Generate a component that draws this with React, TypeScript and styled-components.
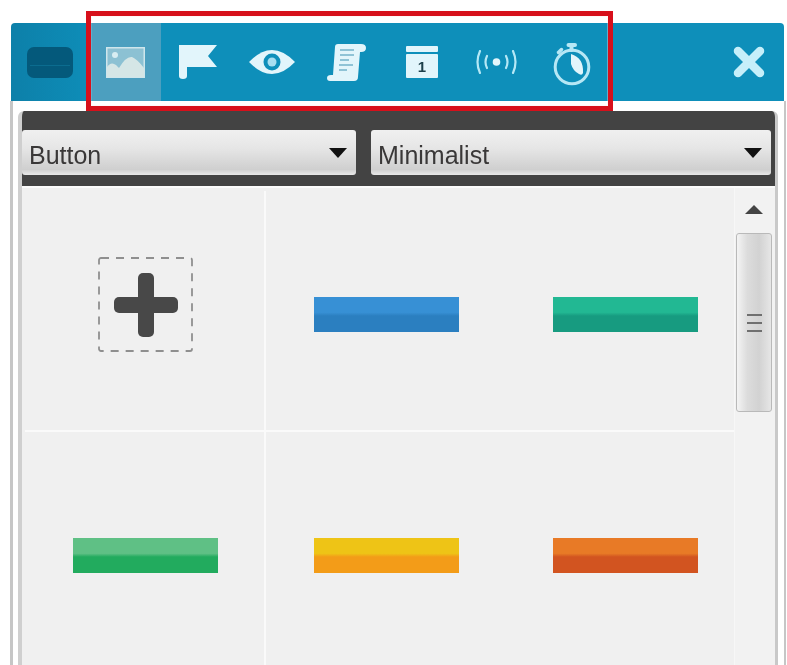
import React from 'react'
import styled, { createGlobalStyle } from 'styled-components'

const GlobalStyle = createGlobalStyle`
  html, body {
    margin: 0;
    padding: 0;
    background: #fff;
    overflow: hidden;
  }
`

const ICON = '#e2f5fb'

const Page = styled.div`
  position: relative;
  box-sizing: border-box;
  width: 787px;
  height: 665px;
  padding: 23px 3px 0 11px;
  overflow: hidden;
  font-family: "Liberation Sans", Arial, sans-serif;
  filter: blur(0.6px);
`

const Header = styled.header`
  display: flex;
  align-items: stretch;
  height: 78px;
  padding-left: 16px;
  border-radius: 4px 4px 0 0;
  background: linear-gradient(90deg, #0d80a9 0, #0e8fba 90px, #0e8fba 100%);
`

const MenuButton = styled.div`
  position: relative;
  align-self: center;
  width: 46px;
  height: 31px;
  margin: 0 19px 0 0;
  border-radius: 7px;
  background: #04597b;

  &::after {
    content: '';
    position: absolute;
    left: 3px;
    right: 3px;
    top: 18px;
    height: 1px;
    background: #0b6c8f;
  }
`

const Tabs = styled.nav`
  display: flex;
  flex: 1;
`

const Tab = styled.div<{ $width: number; $active?: boolean }>`
  display: flex;
  align-items: center;
  justify-content: center;
  width: ${(p) => p.$width}px;
  padding-right: ${(p) => (p.$active ? 3 : 0)}px;
  box-sizing: border-box;
  background: ${(p) => (p.$active ? '#4c9fbf' : 'transparent')};
`

const CloseButton = styled.div`
  display: flex;
  align-items: center;
  margin-right: 19px;
`

const Highlight = styled.div`
  position: absolute;
  left: 86px;
  top: 11px;
  width: 527px;
  height: 100px;
  box-sizing: border-box;
  border: 5.5px solid #d7101b;
  box-shadow: inset 0 0 0 1px rgba(255, 235, 235, 0.35);
  pointer-events: none;
`

const Body = styled.div`
  height: 564px;
  margin: 0 -2px 0 -1px;
  padding: 10px 6px 0 5px;
  border-left: 3px solid #c6c6c6;
  border-right: 2px solid #c6c6c6;
  background: #fff;
`

const Panel = styled.div`
  height: 100%;
  border-radius: 6px 6px 0 0;
  border-left: 4px solid #cfcfcf;
  border-right: 3px solid #c9c9c9;
  background: #f0f0f0;
  overflow: hidden;
`

const Toolbar = styled.div`
  display: grid;
  grid-template-columns: 334px 1fr;
  gap: 15px;
  margin: 0 -3px 0 -4px;
  padding: 19px 7px 11px 4px;
  border-bottom: 2px solid #fbfbfb;
  background: #434343;
`

const Select = styled.div`
  display: flex;
  align-items: center;
  justify-content: space-between;
  height: 45px;
  padding: 0 9px 0 7px;
  border-radius: 3px;
  background: linear-gradient(180deg, #f0f0f0 0, #e6e6e6 40%, #cfcfcf 88%, #e9e9e9 100%);
  color: #3a3838;
  font-size: 25px;
`

const SelectLabel = styled.span`
  padding-top: 5px;
`

const Caret = styled.span`
  width: 0;
  height: 0;
  border-left: 9px solid transparent;
  border-right: 9px solid transparent;
  border-top: 10px solid #111;
`

const ListArea = styled.div`
  display: flex;
  height: 100%;
`

const List = styled.div`
  flex: 1;
  min-width: 0;
  padding: 3px 0 0 3px;
  overflow: hidden;
`

const Grid = styled.div`
  display: grid;
  grid-template-columns: 241px 241px 237px;
  grid-auto-rows: 241px;
  width: 719px;
`

const Cell = styled.div`
  display: flex;
  align-items: center;
  justify-content: center;
  box-sizing: border-box;
  padding-top: 8px;
  border-bottom: 2px solid #fafafa;

  &:nth-child(3n + 1) {
    box-shadow: inset -2px 0 0 #fafafa;
  }
`

const AddSlot = styled.div`
  display: flex;
  margin-bottom: 20px;
`

const StyleSwatch = styled.div<{ $top: string; $bottom: string }>`
  width: 145px;
  height: 35px;
  background: linear-gradient(180deg, ${(p) => p.$top} 0, ${(p) => p.$top} 44%, ${(p) => p.$bottom} 54%, ${(p) => p.$bottom} 100%);
`

const Scrollbar = styled.div`
  display: flex;
  flex-direction: column;
  align-items: center;
  flex: 0 0 40px;
  box-sizing: border-box;
  padding: 17px 3px 0 1px;
  border-left: 1px solid #f7f7f7;
  background: #f2f2f2;
`

const ScrollArrow = styled.span`
  width: 0;
  height: 0;
  border-left: 9px solid transparent;
  border-right: 9px solid transparent;
  border-bottom: 9px solid #444;
`

const ScrollThumb = styled.div`
  display: flex;
  flex-direction: column;
  align-items: center;
  justify-content: center;
  gap: 6px;
  box-sizing: border-box;
  width: 36px;
  height: 179px;
  margin-top: 19px;
  border: 1px solid #b9b9b9;
  border-radius: 3px;
  background: linear-gradient(90deg, #f4f4f4 0, #dcdcdc 30%, #d2d2d2 65%, #e6e6e6 100%);
`

const Grip = styled.span`
  width: 15px;
  height: 2px;
  background: #6f6f6f;
`

const SWATCHES = [
  { top: '#3790d5', bottom: '#2b7fc0' },
  { top: '#22b893', bottom: '#179b80' },
  { top: '#5fc085', bottom: '#22ab5e' },
  { top: '#eec416', bottom: '#f39c18' },
  { top: '#e87a26', bottom: '#d25420' },
]

function ImageIcon() {
  return (
    <svg width="39" height="31" viewBox="0 0 39 31">
      <rect x="0.75" y="0.75" width="37.5" height="29.5" fill="#8cc1d3" stroke="#cfe6ec" strokeWidth="1.5" />
      <circle cx="9" cy="8" r="3" fill="#d8edf2" />
      <path d="M1 30 V20 Q5 14 10 18 L13 21 Q20 9 26 10 Q31 12 38 21 V30 Z" fill="#d5e6e6" />
    </svg>
  )
}

function FlagIcon() {
  return (
    <svg width="39" height="34" viewBox="0 0 39 34">
      <path d="M1 0 H39 L30 11 L39 22 H9 V31 Q9 34 5 34 Q1 34 1 31 Z" fill={ICON} />
    </svg>
  )
}

function EyeIcon() {
  return (
    <svg width="46" height="24" viewBox="0 0 46 24">
      <path d="M0 12 Q23 -12 46 12 Q23 36 0 12 Z" fill={ICON} />
      <circle cx="23" cy="12" r="8.5" fill="#0e8fba" />
      <circle cx="23" cy="12" r="4.5" fill="#a8def0" />
    </svg>
  )
}

function ScrollIcon() {
  return (
    <svg width="39" height="37" viewBox="0 0 39 37">
      <path d="M8 3 Q8 0 11 0 H34 Q39 0 39 4 Q39 8 34 8 H33 L31 33 Q31 37 27 37 H3 Q0 37 0 34 Q0 31 4 31 H6 Z" fill={ICON} />
      <path d="M13 6 H27 M13 11 H27 M13 16 H22 M12 21 H26 M12 26 H20" stroke="#8fc3d6" strokeWidth="2" />
    </svg>
  )
}

function CalendarIcon() {
  return (
    <svg width="32" height="32" viewBox="0 0 32 32">
      <rect x="0" y="0" width="32" height="6" rx="1" fill={ICON} />
      <rect x="0" y="8" width="32" height="24" rx="1" fill={ICON} />
      <text x="16" y="26" textAnchor="middle" fontSize="15" fontWeight="700" fontFamily="Liberation Sans, sans-serif" fill="#1d3f4a">1</text>
    </svg>
  )
}

function SignalIcon() {
  return (
    <svg width="41" height="24" viewBox="0 0 41 24" fill="none" stroke="#b5e8f6" strokeWidth="2.2" strokeLinecap="round">
      <circle cx="20.5" cy="12" r="3.8" fill={ICON} stroke="none" />
      <path d="M11 6 Q8 12 11 18 M30 6 Q33 12 30 18" />
      <path d="M4 1 Q-1 12 4 23 M37 1 Q42 12 37 23" />
    </svg>
  )
}

function StopwatchIcon() {
  return (
    <svg width="38" height="47" viewBox="0 -4 38 47" fill="none">
      <circle cx="19" cy="24" r="16.8" stroke="#b6e7f5" strokeWidth="3" />
      <path d="M15.5 2 H22 M18.5 2 V7" stroke="#b6e7f5" strokeWidth="4" strokeLinecap="round" />
      <path d="M5.5 9.5 L8.5 6.5" stroke="#b6e7f5" strokeWidth="3.5" strokeLinecap="round" />
      <path d="M18 11 Q31 15 30 30 Q29 33 26 31 Q20 28 18 21 Z" fill={ICON} />
    </svg>
  )
}

function CloseIcon() {
  return (
    <svg width="32" height="32" viewBox="0 0 32 32">
      <path d="M5 5 L27 27 M27 5 L5 27" stroke="#c6effa" strokeWidth="8.5" strokeLinecap="round" />
    </svg>
  )
}

function AddIcon() {
  return (
    <svg width="95" height="95" viewBox="0 0 95 95">
      <rect x="1" y="1" width="93" height="93" rx="2" fill="none" stroke="#8f8f8f" strokeWidth="1.8" strokeDasharray="8 7" />
      <rect x="40" y="16" width="16" height="64" rx="5" fill="#484848" />
      <rect x="16" y="40" width="64" height="16" rx="5" fill="#484848" />
    </svg>
  )
}

function App() {
  return (
    <Page>
      <GlobalStyle />

      {/* HEADER */}
      <Header>
        <MenuButton />
        <Tabs>
          <Tab $width={69} $active><ImageIcon /></Tab>
          <Tab $width={73}><FlagIcon /></Tab>
          <Tab $width={75}><EyeIcon /></Tab>
          <Tab $width={75}><ScrollIcon /></Tab>
          <Tab $width={75}><CalendarIcon /></Tab>
          <Tab $width={75}><SignalIcon /></Tab>
          <Tab $width={75}><StopwatchIcon /></Tab>
        </Tabs>
        <CloseButton><CloseIcon /></CloseButton>
      </Header>

      {/* BODY */}
      <Body>
        <Panel>
          <Toolbar>
            <Select><SelectLabel>Button</SelectLabel><Caret /></Select>
            <Select><SelectLabel>Minimalist</SelectLabel><Caret /></Select>
          </Toolbar>
          <ListArea>
            <List>
              <Grid>
                <Cell><AddSlot><AddIcon /></AddSlot></Cell>
                {SWATCHES.map((swatch) => (
                  <Cell key={swatch.top}>
                    <StyleSwatch $top={swatch.top} $bottom={swatch.bottom} />
                  </Cell>
                ))}
              </Grid>
            </List>
            <Scrollbar>
              <ScrollArrow />
              <ScrollThumb>
                <Grip />
                <Grip />
                <Grip />
              </ScrollThumb>
            </Scrollbar>
          </ListArea>
        </Panel>
      </Body>

      {/* ANNOTATION */}
      <Highlight />
    </Page>
  )
}

export default App
